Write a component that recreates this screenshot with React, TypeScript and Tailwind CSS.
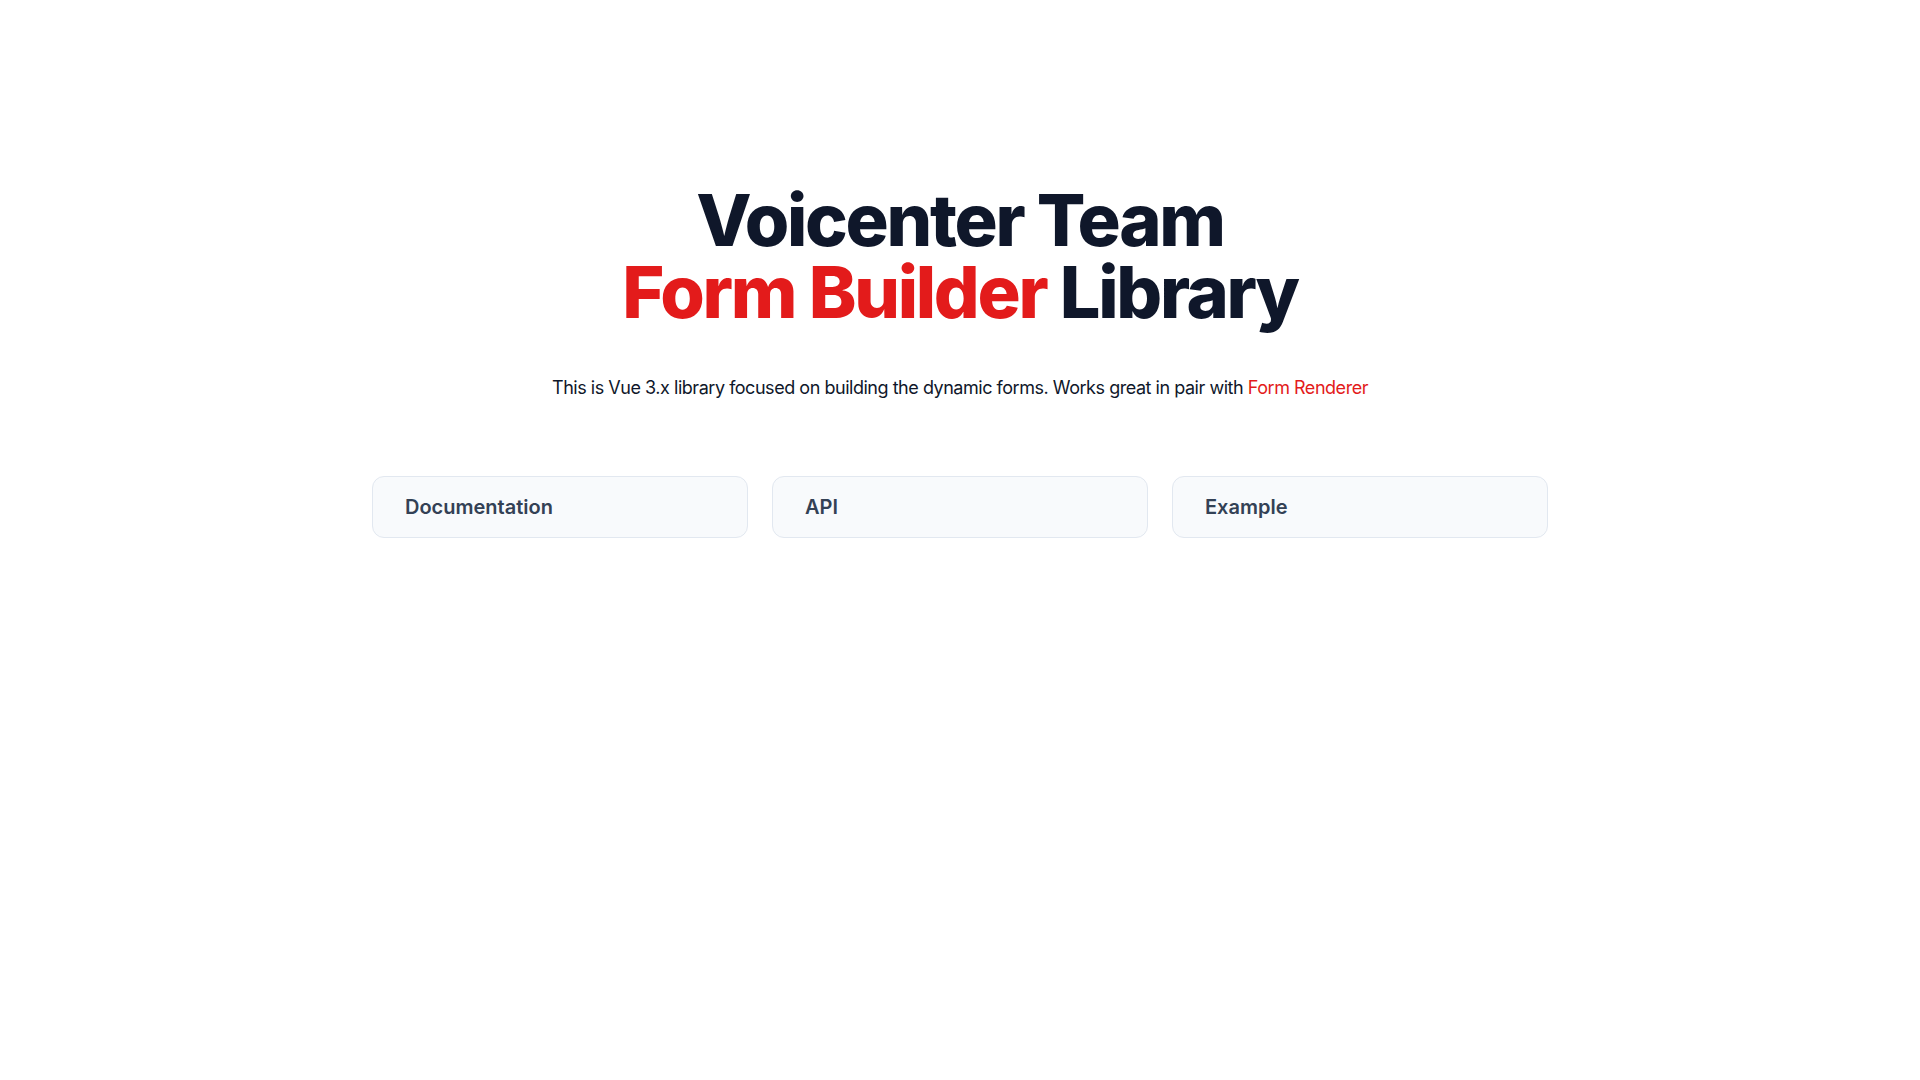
const links = ["Documentation", "API", "Example"];

const App = () => {
  return (
    <div className="min-h-screen bg-white font-['Inter','Noto_Sans',sans-serif] text-[#0f172a]">
      <div className="mx-auto flex max-w-[1176px] flex-col items-center pt-[184px]">
        <h1 className="text-center text-7xl leading-none font-extrabold tracking-[-0.032em]">
          <span className="block">Voicenter Team</span>
          <span className="block">
            <span className="text-[#e31b1b]">Form Builder</span> Library
          </span>
        </h1>

        <p className="mt-[46px] text-center text-lg leading-7 tracking-[-0.026em]">
          This is Vue 3.x library focused on building the dynamic forms. Works great in pair with{" "}
          <a href="#" className="text-[#e31b1b]">
            Form Renderer
          </a>
        </p>

        <div className="mt-[74px] grid w-full grid-cols-3 gap-6">
          {links.map((label) => (
            <a
              key={label}
              href="#"
              className="rounded-xl border border-[#e2e8f0] bg-[#f8fafc] px-8 py-4 text-xl leading-7 font-semibold text-[#334155]"
            >
              {label}
            </a>
          ))}
        </div>
      </div>
    </div>
  );
};

export default App;
